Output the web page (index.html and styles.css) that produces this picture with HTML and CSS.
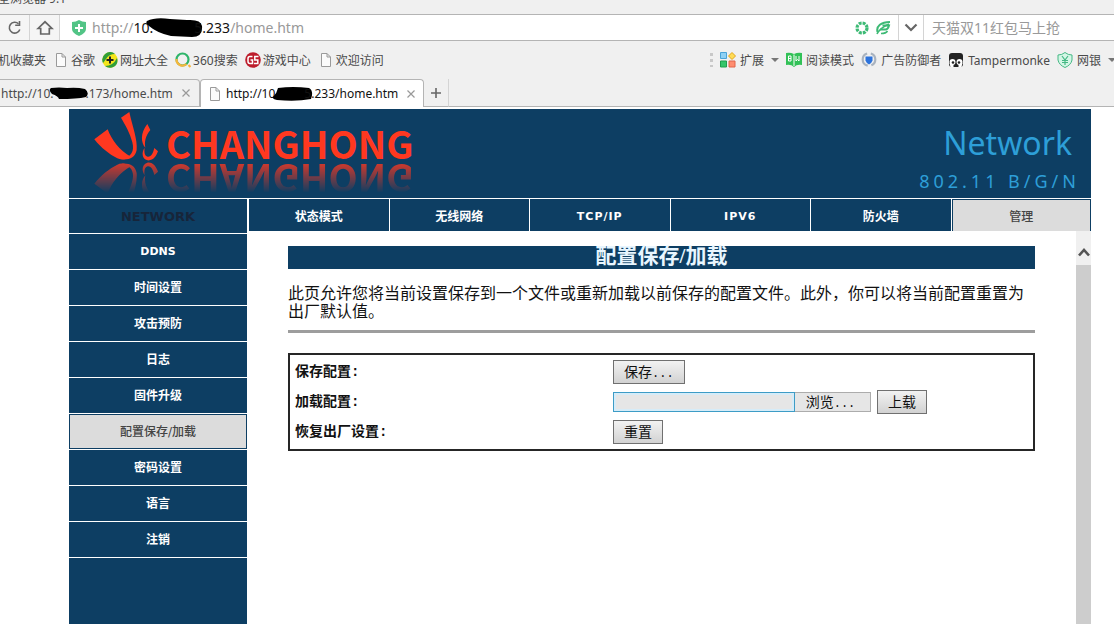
FILE: index.html
```html
<!DOCTYPE html>
<html lang="zh-CN">
<head>
<meta charset="utf-8">
<title>配置保存/加载</title>
<link rel="stylesheet" href="styles.css">
</head>
<body>
<svg class="defs" aria-hidden="true">
  <symbol id="page" viewBox="0 0 16 16"><path d="M3.500 1.500h5.500l3.500 3.500v9.500h-9zM9 1.500v3.500h3.500" fill="#fbfbfb" stroke="#9a9a9a"/></symbol>
  <symbol id="close" viewBox="0 0 10 10"><path d="M1.500 1.500l7 7M8.500 1.500l-7 7" stroke="#999" stroke-width="1.200" fill="none"/></symbol>
  <symbol id="caret" viewBox="0 0 8 4"><path d="M0 0h8L4 4z" fill="#777"/></symbol>
</svg>

<header class="browser">
  <div class="titlebar"><span>全浏览器 9.1</span></div>

  <div class="addressbar">
    <button class="tool" aria-label="刷新"><svg width="16" height="16" viewBox="0 0 16 16" fill="none" stroke="#666" stroke-width="1.600"><path d="M11.500 3.800A5.400 5.400 0 1 0 12.800 9.500"/><path d="M12.500 1v4.300H8.200"/></svg></button>
    <button class="tool" aria-label="主页"><svg width="18" height="16" viewBox="0 0 18 16" fill="none" stroke="#666" stroke-width="1.700"><path d="M2 8.500L9 1.800l7 6.700h-2.700V14H4.700V8.500z"/></svg></button>
    <div class="url">
      <svg class="shield" width="14" height="16" viewBox="0 0 14 16"><path d="M0 2q4 0 7-2 3 2 7 2v7q0 4-7 7-7-3-7-7z" fill="#52c486"/><path d="M7 4v8M3 8h8" stroke="#fff" stroke-width="2"/></svg>
      <span class="dim">http://</span><span>10.</span><svg class="blob blob-url" width="58" height="19" viewBox="0 0 58 19"><path d="M2 3Q10-1 25 1l17 1q14-1 15 6 1 11-10 11l-21-1Q12 15 4 8 0 5 2 3z"/></svg><span>5.233</span><span class="dim">/home.htm</span>
    </div>
    <div class="urlicons">
      <svg width="14" height="14" viewBox="0 0 14 14" fill="none" stroke="#3dba75"><circle cx="7" cy="7" r="5" stroke-width="3.200" stroke-dasharray="2.900 1.027"/></svg>
      <svg width="15" height="14" viewBox="0 0 15 14" fill="none" stroke="#3dba75"><path d="M1.500 11C0 5 5 1 14 1M4.500 8.500h5q2.500 0 3.500-4H6.500" stroke-width="2"/><path d="M1 13Q4 7 13 3M5 12.500q5 0 6.500-2.500" stroke-width="1.600"/></svg>
    </div>
    <button class="drop" aria-label="展开"><svg width="14" height="9" viewBox="0 0 14 9"><path d="M1.500 1.500L7 7l5.500-5.500" fill="none" stroke="#666" stroke-width="2.200"/></svg></button>
    <input class="search" type="text" aria-label="搜索" placeholder="天猫双11红包马上抢">
  </div>

  <nav class="bookmarks">
    <a class="mark first" href="#">机收藏夹</a>
    <a class="mark" href="#"><svg width="16" height="16"><use href="#page"/></svg>谷歌</a>
    <a class="mark" href="#"><svg width="16" height="16" viewBox="0 0 16 16"><circle cx="8" cy="8" r="7.700" fill="#f5e51b"/><path d="M1 11A7.700 7.700 0 0 1 13 2Q7 2 4 7q-2 3-3 4zM3 14q8 0 12-8 2 7-5 9.500-4 1-7-1.500z" fill="#2f9e3a"/><path d="M8 4.500v7M4.500 8h7" stroke="#222" stroke-width="2"/></svg>网址大全</a>
    <a class="mark" href="#"><svg width="16" height="16" viewBox="0 0 16 16" fill="none" stroke-width="2.200"><circle cx="7.500" cy="7.500" r="6" stroke="#2fb56a"/><path d="M1.500 7A6 6 0 0 0 11.500 12M13.500 13l2 2" stroke="#f6b63c"/></svg>360搜索</a>
    <a class="mark" href="#"><svg width="16" height="16" viewBox="0 0 16 16"><circle cx="8" cy="8" r="7.800" fill="#bd1d2c"/><path d="M7.500 4.500H5q-2 0-2 2v3q0 2 2 2h2.500V8H5.500M13.500 4.500H9.800V8h3v3.500H9" fill="none" stroke="#fff" stroke-width="1.500"/></svg>游戏中心</a>
    <a class="mark" href="#"><svg width="16" height="16"><use href="#page"/></svg>欢迎访问</a>
    <span class="grip"></span>
    <a class="mark ext" href="#"><svg width="16" height="16" viewBox="0 0 16 16"><path d="M.5.500h6v6h-6z" fill="#8fd0f4" stroke="#4aa3d8"/><path d="M.5 9h6v6h-6z" fill="#35c56a" stroke="#1e9f4c"/><path d="M9 9h6v6H9z" fill="#ff8d70" stroke="#e0644a"/><path d="M12 .5L15.500 4 12 7.500 8.500 4z" fill="#ffdc55" stroke="#e2a51a"/></svg>扩展</a>
    <svg class="caret" width="8" height="4"><use href="#caret"/></svg>
    <a class="mark ext" href="#"><svg width="16" height="16" viewBox="0 0 16 16"><path d="M0 1q4-1 8 1 4-2 8-1v12q-5-1-8 2-3-3-8-2z" fill="#32c157"/><path d="M2.500 4v5H5V4zM2.500 6.500H5M8 2.500V14M10 4v5l1.500-1.500L13 9V4" fill="none" stroke="#fff"/></svg>阅读模式</a>
    <a class="mark ext" href="#"><svg width="16" height="16" viewBox="0 0 16 16" fill="none"><circle cx="8" cy="7.500" r="6.300" stroke="#a9b3bf" stroke-width="2.200" stroke-dasharray="16 3.800" stroke-dashoffset="-11"/><path d="M4.500 4.500h7v4q-1 3-3.500 4-2.500-1-3.500-4z" fill="#2d73dc"/></svg>广告防御者</a>
    <a class="mark ext" href="#"><svg width="16" height="16" viewBox="0 0 16 16"><rect x="1" y="1" width="14" height="14" rx="3" fill="#222"/><circle cx="4.500" cy="10" r="3" fill="#fff"/><circle cx="11.500" cy="10" r="3" fill="#fff"/><path d="M1.500 11h4v4h-3zM14.500 11h-4v4h3z" fill="#fff"/><circle cx="5" cy="10.500" r="1.300" fill="#222"/><circle cx="11" cy="10.500" r="1.300" fill="#222"/></svg>Tampermonke</a>
    <a class="mark ext" href="#"><svg width="16" height="16" viewBox="0 0 16 16" fill="none" stroke="#45b884"><path d="M1 3q4 0 7-2.500Q11 3 15 3v5q-1 5-7 7.500Q2 13 1 8z" fill="#d4f6e6"/><path d="M5 4l3 4 3-4M8 8v5M5 8.500h6M5 10.500h6" stroke-width="1.200"/></svg>网银</a>
    <svg class="caret" width="8" height="4"><use href="#caret"/></svg>
  </nav>

  <div class="tabs">
    <div class="tab">
      <a href="#">http://10.<svg class="blob blob-one" width="40" height="12" viewBox="0 0 40 12"><path d="M2 1q8-1 16 0 10-1 18 1 5 4 1 8-9 2-27 2-1-3-7-5-4-4-1-6z"/></svg>.173/home.htm</a>
      <button class="x" aria-label="关闭标签"><svg width="10" height="10"><use href="#close"/></svg></button>
    </div>
    <div class="tab active">
      <svg class="fav" width="16" height="16"><use href="#page"/></svg>
      <a href="#">http://10<svg class="blob blob-two" width="40" height="14" viewBox="0 0 40 14"><path d="M5 1q15-2 31 0 5 3 2 11-15 3-34 1-5-1-4-3 4-4 5-9z"/></svg>5.233/home.htm</a>
      <button class="x" aria-label="关闭标签"><svg width="10" height="10"><use href="#close"/></svg></button>
    </div>
    <button class="newtab" aria-label="新建标签"><svg width="10" height="10" viewBox="0 0 10 10"><path d="M5 0v10M0 5h10" stroke="#666" stroke-width="1.600"/></svg></button>
    <span class="tabfill"></span>
  </div>
</header>

<div class="router">
  <header class="banner">
    <svg class="logo" width="350" height="88" viewBox="0 0 350 88" role="img" aria-label="CHANGHONG">
      <defs>
        <linearGradient id="fade" x1="0" y1="53" x2="0" y2="84" gradientUnits="userSpaceOnUse"><stop offset="0" stop-color="#fff" stop-opacity=".85"/><stop offset="1" stop-color="#fff" stop-opacity="0"/></linearGradient>
        <mask id="mirror" maskUnits="userSpaceOnUse" x="0" y="53" width="350" height="35"><rect y="53" width="350" height="35" fill="url(#fade)"/></mask>
        <g id="brand">
          <g transform="translate(-9 -9) scale(.3333)">
            <path d="M103 118L143 88C155 120 177 150 214 171C198 178 183 181 172 175C146 162 124 144 103 118z"/>
            <path d="M183 53L208 36C218 83 233 118 230 150C226 172 209 180 185 178C214 172 224 154 217 127C210 98 196 76 183 53z"/>
            <path d="M262 72L271 90C256 108 253 126 256 143C243 129 240 100 262 72zM254 144C244 156 246 177 262 181C280 183 288 169 294 154L283 144C279 160 274 171 263 170C254 168 252 157 254 144z"/>
          </g>
          <text class="wordmark" x="97" y="50">CHANGHONG</text>
        </g>
      </defs>
      <use href="#brand"/>
      <g mask="url(#mirror)"><use href="#brand" transform="translate(0 105) scale(1 -1)"/></g>
    </svg>
    <div class="product"><div class="name">Network</div><div class="std">802.11 B/G/N</div></div>
  </header>

  <div class="main">
    <nav class="side">
      <div class="sidehead">NETWORK</div>
      <a class="latin" href="#">DDNS</a>
      <a href="#">时间设置</a>
      <a href="#">攻击预防</a>
      <a href="#">日志</a>
      <a href="#">固件升级</a>
      <a class="on" href="#">配置保存/加载</a>
      <a href="#">密码设置</a>
      <a href="#">语言</a>
      <a href="#">注销</a>
    </nav>
    <div class="right">
      <nav class="top">
        <a href="#">状态模式</a>
        <a href="#">无线网络</a>
        <a class="latin" href="#">TCP/IP</a>
        <a class="latin" href="#">IPV6</a>
        <a href="#">防火墙</a>
        <a class="on" href="#">管理</a>
      </nav>
      <div class="pane">
        <main class="content">
          <h1>配置保存/加载</h1>
          <p>此页允许您将当前设置保存到一个文件或重新加载以前保存的配置文件。此外，你可以将当前配置重置为出厂默认值。</p>
          <hr>
          <form class="config">
            <label for="save">保存配置:</label>
            <div class="field"><button type="button" class="btn" id="save">保存<span class="dots">...</span></button></div>
            <label for="file">加载配置:</label>
            <div class="field">
              <div class="picker"><input type="text" id="file" readonly><button type="button">浏览<span class="dots">...</span></button></div>
              <button type="button" class="btn">上载</button>
            </div>
            <label for="reset">恢复出厂设置:</label>
            <div class="field"><button type="button" class="btn" id="reset">重置</button></div>
          </form>
        </main>
        <div class="scrollbar">
          <button aria-label="向上滚动"><svg width="12" height="9" viewBox="0 0 12 9"><path d="M1 7.500L6 2l5 5.500" fill="none" stroke="#555" stroke-width="2.600"/></svg></button>
          <div class="thumb"></div>
        </div>
      </div>
    </div>
  </div>
</div>
</body>
</html>
```

FILE: styles.css
```css
* { box-sizing: border-box; }

body {
  margin: 0;
  height: 100vh;
  display: flex;
  flex-direction: column;
  overflow: hidden;
  background: #fff;
  font: 12px "Noto Sans", "Noto Sans CJK SC", sans-serif;
}

a { color: inherit; text-decoration: none; }
button { padding: 0; border: 0; background: none; font: inherit; color: inherit; }
svg { display: block; flex: none; }
.defs { position: absolute; width: 0; height: 0; }

/* browser chrome */
.browser { flex: none; background: #f0f0f0; color: #4a4a4a; }
.titlebar { height: 14px; overflow: hidden; line-height: 14px; }
.titlebar span { display: block; margin: -8px 0 0 -2px; }

.addressbar {
  display: flex;
  height: 27px;
  background: #fff;
  border-top: 1px solid #b4b4b4;
  border-bottom: 1px solid #b4b4b4;
}
.tool {
  display: flex;
  align-items: center;
  justify-content: center;
  width: 30px;
  background: #f5f5f5;
  border-right: 1px solid #d4d4d4;
}
.url { flex: 1; display: flex; align-items: center; padding-left: 12px; font-size: 14px; color: #111; }
.shield { margin-right: 6px; }
.dim { color: #999; }
.blob { fill: #000; }
.blob-url { margin: 0 -9px 0 -8px; }
.urlicons { display: flex; align-items: center; gap: 7px; padding-right: 7px; }
.drop {
  display: flex;
  align-items: center;
  justify-content: center;
  width: 26px;
  border: solid #d4d4d4;
  border-width: 0 1px;
}
.search { width: 190px; padding: 0 8px; border: 0; font: 14px "Noto Sans", "Noto Sans CJK SC", sans-serif; }
.search::placeholder { color: #999; opacity: 1; }

.bookmarks { display: flex; align-items: center; gap: 7px; height: 38px; margin-right: -2px; overflow: hidden; white-space: nowrap; }
.mark { display: flex; align-items: center; gap: 2px; }
.mark.first { margin-left: -2px; }
.mark.ext { gap: 4px; }
.grip { width: 3px; height: 14px; margin-left: auto; background: repeating-linear-gradient(#c8c8c8 0 3px, transparent 3px 6px); }

.tabs { display: flex; height: 28px; }
.tab {
  display: flex;
  align-items: center;
  width: 200px;
  padding: 0 8px 0 1px;
  border: solid #b4b4b4;
  border-width: 1px 1px 1px 0;
  border-radius: 0 4px 0 0;
}
.tab a { display: flex; align-items: center; margin-right: auto; }
.tab.active { width: 224px; padding: 0 7px 0 6px; background: #fff; color: #111; border-width: 1px 1px 0 1px; border-radius: 4px 4px 0 0; }
.fav { margin-right: 3px; }
.blob-one { margin: 0 -3px 0 -5px; }
.blob-two { margin: 0 -9px 0 -2px; }
.newtab {
  display: flex;
  align-items: center;
  justify-content: center;
  width: 25px;
  border: solid #b4b4b4;
  border-width: 0 0 1px;
  border-right: 1px solid #d4d4d4;
}
.tabfill { flex: 1; border-bottom: 1px solid #b4b4b4; }

/* router page */
.router { flex: 1; min-height: 0; display: flex; flex-direction: column; margin: 2px 23px 0 69px; }
.banner {
  flex: none;
  display: flex;
  justify-content: space-between;
  height: 89px;
  background: #0d3e63;
}
.logo { fill: #ff3820; }
.wordmark { font: bold 38px "Noto Sans CJK SC", sans-serif; }
.product { padding: 12px 11px 0 0; color: #2d9fd8; text-align: right; }
.name { padding-right: 8px; font-size: 32px; line-height: 44px; }
.std { font-size: 18px; line-height: 32px; letter-spacing: 4px; }

.main { flex: 1; min-height: 0; display: flex; gap: 2px; padding-top: 1px; }
.side, .top { color: #fff; font: bold 12px/16px "DejaVu Sans", "Noto Sans CJK SC", sans-serif; text-align: center; }
.side { flex: none; width: 178px; background: #0d3e63; }
.side > * { display: block; height: 36px; padding: 10px 0 9px; border-bottom: 1px solid #fff; }
.side .sidehead { height: 35px; color: #17253a; font-size: 13px; }
.top { flex: none; display: grid; grid-template-columns: repeat(6, 1fr); gap: 1px; }
.top a { padding: 10px 0 6px; background: #0d3e63; }
.side .latin, .top .latin { font-size: 11px; }
.top .latin { letter-spacing: 1px; }
.side .on, .top .on { background: #dcdcdc; color: #444; font-weight: 500; box-shadow: inset 0 0 0 1px #0d3e63; }
.top .on { box-shadow: inset 1px 1px #0d3e63, inset -1px 0 #0d3e63; }

.right { flex: 1; min-width: 0; display: flex; flex-direction: column; }
.pane { flex: 1; min-height: 0; display: flex; }
.content { flex: 1; padding: 15px 41px 0 39px; font: 16px "Liberation Serif", "Noto Sans CJK SC", serif; color: #111; }
h1 { margin: 0; padding-bottom: 2px; background: #0d3e63; color: #e8f6ff; font-size: 21px; line-height: 21px; text-align: center; }
p { margin: 16px 0 9px; line-height: 18px; }
hr { height: 3px; margin: 0; border: 0; background: #9d9d9d; }
.config {
  display: grid;
  grid-template-columns: 318px 1fr;
  grid-auto-rows: 30px;
  align-items: center;
  margin-top: 20px;
  padding: 2px 5px;
  border: 2px solid #262626;
}
.config label { padding-bottom: 4px; font: bold 14px "Liberation Mono", "Noto Sans CJK SC", monospace; }
.field { display: flex; align-items: center; gap: 6px; font: 14px "Noto Sans CJK SC", sans-serif; }
.dots { font: 12px "Liberation Mono", monospace; }
.btn { height: 24px; padding: 0 10px 2px; border: 1px solid #707070; background: linear-gradient(#f2f2f2, #d2d2d2); }
.picker { display: flex; height: 20px; }
.picker input { width: 182px; border: 1px solid #3d9cc6; background: #e6e6e6; box-shadow: inset 0 0 0 2px #d6ecf8; }
.picker button { width: 76px; padding: 0 4px 2px 0; border: 1px solid #acacac; border-left: 0; background: #e6e6e6; line-height: 16px; }

.scrollbar { flex: none; display: flex; flex-direction: column; width: 15px; background: #f0f0f0; }
.scrollbar button { display: flex; align-items: center; justify-content: center; height: 34px; padding-top: 8px; }
.thumb { flex: 1; background: #cdcdcd; }
```
